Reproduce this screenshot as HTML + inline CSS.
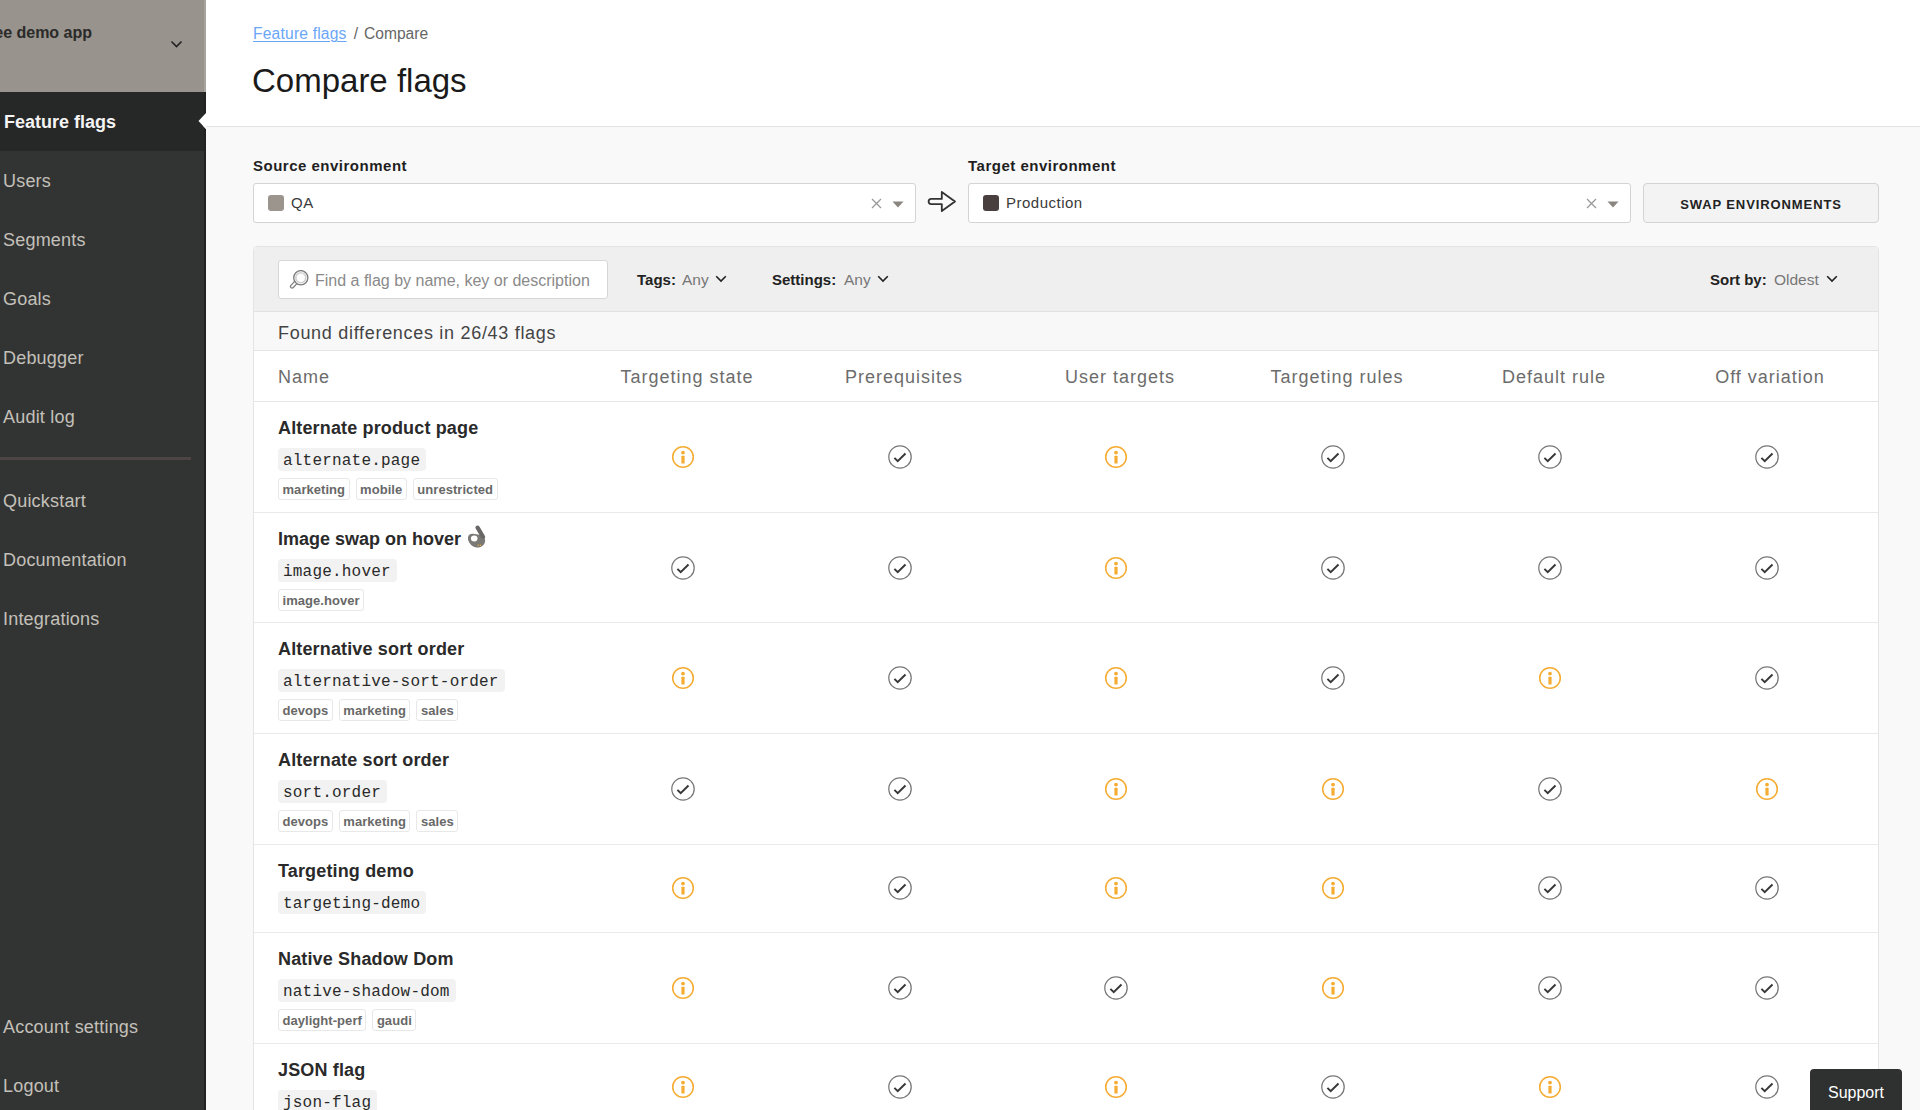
<!DOCTYPE html>
<html><head><meta charset="utf-8">
<style>
*{box-sizing:border-box;margin:0;padding:0}
html,body{width:1920px;height:1110px;overflow:hidden}
body{font-family:"Liberation Sans",sans-serif;background:#f9f9f9;position:relative;color:#222}
.abs{position:absolute}
#sb{position:absolute;left:0;top:0;width:206px;height:1110px;background:#323433}
#sb .proj{position:absolute;left:0;top:0;width:204px;height:92px;background:#98938c}
#sb .edge{position:absolute;left:204px;top:0;width:2px;height:1110px;background:#222}
#sb .edge2{position:absolute;left:204px;top:0;width:2px;height:92px;background:#a7a39d}
#sb .projname{position:absolute;left:-12px;top:24px;font-size:16px;font-weight:700;color:#2a2a2a;white-space:nowrap}
#sb .active{position:absolute;left:0;top:92px;width:204px;height:59px;background:#262727}
#sb .nav{position:absolute;left:3px;font-size:18px;letter-spacing:0.2px;color:#c4c0ba;white-space:nowrap;line-height:20px}
#sb .nav.on{left:4px;color:#f4f4f4;font-weight:700;letter-spacing:0}
#sb .div{position:absolute;left:0;top:457px;width:191px;height:3px;background:#4b4545}
#hdr{position:absolute;left:206px;top:0;width:1714px;height:127px;background:#fff;border-bottom:1px solid #e3e3e3}
.crumb{position:absolute;left:253px;top:25px;font-size:15.6px;white-space:nowrap;line-height:18px}
.crumb a{letter-spacing:0.2px;color:#6aa6f8;text-decoration:underline;text-decoration-thickness:1px;text-underline-offset:2px}
.crumb span{color:#666}
.title{position:absolute;left:252px;top:63px;font-size:33px;color:#1a1a1a;white-space:nowrap;line-height:36px}
.lbl{position:absolute;top:157px;font-size:15px;font-weight:700;color:#1f1f1f;white-space:nowrap;line-height:18px;letter-spacing:0.5px}
.sel{position:absolute;top:183px;height:40px;background:#fff;border:1px solid #d4d4d4;border-radius:3px}
.sw{position:absolute;top:11px;width:16px;height:16px;border-radius:3px}
.seltxt{position:absolute;top:10px;font-size:15px;letter-spacing:0.5px;color:#3a3a3a;line-height:18px;white-space:nowrap}
.btn{position:absolute;left:1643px;top:183px;width:236px;height:40px;background:#f3f3f3;border:1px solid #d3d3d3;border-radius:4px;font-size:13px;font-weight:700;letter-spacing:0.9px;color:#222;text-align:center;line-height:39px;padding-top:1px}
#tbl{position:absolute;left:253px;top:246px;width:1626px;height:900px;background:#fff;border:1px solid #e4e4e4;border-radius:4px 4px 0 0}
.fbar{position:absolute;left:0;top:0;width:1624px;height:65px;background:#efefef;border-bottom:1px solid #e2e2e2;border-radius:3px 3px 0 0}
.search{position:absolute;left:24px;top:13px;width:330px;height:39px;background:#fff;border:1px solid #d6d6d6;border-radius:3px}
.ph{position:absolute;left:36px;top:10px;font-size:16px;color:#8a8a8a;white-space:nowrap;line-height:20px}
.flt{position:absolute;top:23px;font-size:15px;white-space:nowrap;line-height:20px;color:#222}
.flt b{font-weight:700}
.flt.v{color:#777;font-size:15.5px}
.found{position:absolute;left:0;top:65px;width:1624px;height:39px;background:#f8f8f8;border-bottom:1px solid #e4e4e4}
.found div{position:absolute;left:24px;top:11px;font-size:18px;color:#444;letter-spacing:0.7px;white-space:nowrap;line-height:20px}
.th{position:absolute;left:0;top:104px;width:1624px;height:51px;border-bottom:1px solid #e6e6e6}
.th div{position:absolute;top:16px;font-size:18px;color:#6c6c6c;letter-spacing:1px;white-space:nowrap;line-height:20px;text-align:center;width:216px}
.row{position:absolute;left:0;width:1624px;border-bottom:1px solid #e9e9e9}
.nm{position:absolute;left:24px;top:15px;font-size:18px;font-weight:700;color:#2a2a2a;letter-spacing:0.15px;white-space:nowrap;line-height:22px}
.key{position:absolute;left:24px;top:46px;height:23px;background:#f2f2f2;border-radius:4px;padding:2px 6px 0 5px;letter-spacing:0.2px;font-family:"Liberation Mono",monospace;font-size:16px;color:#2a2a2a;line-height:23px;white-space:nowrap}
.tags{position:absolute;left:24px;top:76px;white-space:nowrap;font-size:0}
.tag{display:inline-block;height:22px;border:1px solid #e8e8e8;border-radius:3px;padding:0 3.5px;margin-right:6px;font-size:13px;font-weight:700;letter-spacing:0.05px;line-height:21px;color:#686868;background:#fff}
.ic{position:absolute;width:26px;height:26px}
.support{position:absolute;left:1810px;top:1069px;width:92px;height:45px;background:#2f3131;border-radius:4px 4px 0 0;color:#fff;font-size:16px;line-height:48px;text-align:center}
</style></head><body>
<div id="sb">
  <div class="proj"></div>
  <div class="edge"></div>
  <div class="edge2"></div>
  <div class="projname">ree demo app</div>
  <svg class="abs" style="left:170px;top:40px" width="13" height="9" viewBox="0 0 13 9"><path d="M1.5 1.5 L6.5 6.5 L11.5 1.5" fill="none" stroke="#222" stroke-width="1.6"/></svg>
  <div class="active"></div>
  <svg class="abs" style="left:198px;top:113px" width="8" height="16" viewBox="0 0 8 16"><path d="M8 0 L0.5 8 L8 16 Z" fill="#fff"/><path d="M8 13 L5.2 13 L8 16 Z" fill="#f9f9f9"/></svg>
  <div class="nav on" style="top:112px">Feature flags</div>
  <div class="nav" style="top:171px">Users</div>
  <div class="nav" style="top:230px">Segments</div>
  <div class="nav" style="top:289px">Goals</div>
  <div class="nav" style="top:348px">Debugger</div>
  <div class="nav" style="top:407px">Audit log</div>
  <div class="div"></div>
  <div class="nav" style="top:491px">Quickstart</div>
  <div class="nav" style="top:550px">Documentation</div>
  <div class="nav" style="top:609px">Integrations</div>
  <div class="nav" style="top:1017px">Account settings</div>
  <div class="nav" style="top:1076px">Logout</div>
</div>
<div id="hdr"></div>
<div class="crumb"><a>Feature flags</a><span style="margin:0 6px 0 7px">/</span><span>Compare</span></div>
<div class="title">Compare flags</div>

<div class="lbl" style="left:253px">Source environment</div>
<div class="sel" style="left:253px;width:663px">
  <div class="sw" style="left:14px;background:#9b958e"></div>
  <div class="seltxt" style="left:37px">QA</div>
  <svg class="abs" style="left:617px;top:14px" width="11" height="11" viewBox="0 0 11 11"><path d="M1 1 L10 10 M10 1 L1 10" stroke="#999" stroke-width="1.3"/></svg>
  <svg class="abs" style="left:638px;top:17px" width="12" height="7" viewBox="0 0 12 7"><path d="M0.5 0.5 L11.5 0.5 L6 6.5 Z" fill="#8a857e"/></svg>
</div>
<svg class="abs" style="left:926px;top:189px" width="32" height="25" viewBox="0 0 32 25"><path d="M5.2 9.9 L15.8 9.9 L15.8 2.9 L29 12.5 L15.8 22.1 L15.8 15.1 L5.2 15.1 A2.6 2.6 0 0 1 5.2 9.9 Z" fill="none" stroke="#333" stroke-width="1.8" stroke-linejoin="round"/></svg>
<div class="lbl" style="left:968px">Target environment</div>
<div class="sel" style="left:968px;width:663px">
  <div class="sw" style="left:14px;background:#4a3f3f"></div>
  <div class="seltxt" style="left:37px">Production</div>
  <svg class="abs" style="left:617px;top:14px" width="11" height="11" viewBox="0 0 11 11"><path d="M1 1 L10 10 M10 1 L1 10" stroke="#999" stroke-width="1.3"/></svg>
  <svg class="abs" style="left:638px;top:17px" width="12" height="7" viewBox="0 0 12 7"><path d="M0.5 0.5 L11.5 0.5 L6 6.5 Z" fill="#8a857e"/></svg>
</div>
<div class="btn">SWAP ENVIRONMENTS</div>

<div id="tbl">
  <div class="fbar">
    <div class="search">
      <svg class="abs" style="left:10px;top:9px" width="22" height="22" viewBox="0 0 22 22"><path d="M6.3 13 L3.1 16.4" stroke="#7c7c7c" stroke-width="4.4" stroke-linecap="round"/><path d="M6.3 13 L3.1 16.4" stroke="#fff" stroke-width="2" stroke-linecap="round"/><circle cx="11.8" cy="7.7" r="7.1" fill="#fff" stroke="#7c7c7c" stroke-width="1.3"/><circle cx="11.8" cy="7.7" r="5" fill="none" stroke="#d0d0d0" stroke-width="1.6"/></svg>
      <div class="ph">Find a flag by name, key or description</div>
    </div>
    <div class="flt" style="left:383px"><b>Tags:</b></div><div class="flt v" style="left:428px">Any</div>
    <svg class="abs" style="left:461px;top:28px" width="12" height="8" viewBox="0 0 12 8"><path d="M1.2 1.2 L6 6 L10.8 1.2" fill="none" stroke="#222" stroke-width="1.6"/></svg>
    <div class="flt" style="left:518px"><b>Settings:</b></div><div class="flt v" style="left:590px">Any</div>
    <svg class="abs" style="left:623px;top:28px" width="12" height="8" viewBox="0 0 12 8"><path d="M1.2 1.2 L6 6 L10.8 1.2" fill="none" stroke="#222" stroke-width="1.6"/></svg>
    <div class="flt" style="left:1456px"><b>Sort by:</b></div><div class="flt v" style="left:1520px">Oldest</div>
    <svg class="abs" style="left:1572px;top:28px" width="12" height="8" viewBox="0 0 12 8"><path d="M1.2 1.2 L6 6 L10.8 1.2" fill="none" stroke="#222" stroke-width="1.6"/></svg>
  </div>
  <div class="found"><div>Found differences in 26/43 flags</div></div>
  <div class="th">
    <div style="left:24px;text-align:left">Name</div>
    <div style="left:325px">Targeting state</div>
    <div style="left:542px">Prerequisites</div>
    <div style="left:758px">User targets</div>
    <div style="left:975px">Targeting rules</div>
    <div style="left:1192px">Default rule</div>
    <div style="left:1408px">Off variation</div>
  </div>
  <!--ROWS-->
<div class="row" style="top:155px;height:111px"><div class="nm">Alternate product page</div><div class="key">alternate.page</div><div class="tags"><span class="tag">marketing</span><span class="tag">mobile</span><span class="tag">unrestricted</span></div><svg class="ic" style="left:416px;top:42px" width="26" height="26" viewBox="0 0 26 26"><circle cx="13" cy="13" r="10.3" fill="none" stroke="#f5ac33" stroke-width="1.55"/><circle cx="13" cy="8.6" r="1.9" fill="#f5ac33"/><rect x="11.4" y="11.7" width="3.2" height="7.8" rx="0.6" fill="#f5ac33"/></svg><svg class="ic" style="left:633px;top:42px" width="26" height="26" viewBox="0 0 26 26"><circle cx="13" cy="13" r="11.2" fill="none" stroke="#777" stroke-width="1.25"/><path d="M7.4 13.9 L10.7 17.1 L18.5 9.5" fill="none" stroke="#383838" stroke-width="2"/></svg><svg class="ic" style="left:849px;top:42px" width="26" height="26" viewBox="0 0 26 26"><circle cx="13" cy="13" r="10.3" fill="none" stroke="#f5ac33" stroke-width="1.55"/><circle cx="13" cy="8.6" r="1.9" fill="#f5ac33"/><rect x="11.4" y="11.7" width="3.2" height="7.8" rx="0.6" fill="#f5ac33"/></svg><svg class="ic" style="left:1066px;top:42px" width="26" height="26" viewBox="0 0 26 26"><circle cx="13" cy="13" r="11.2" fill="none" stroke="#777" stroke-width="1.25"/><path d="M7.4 13.9 L10.7 17.1 L18.5 9.5" fill="none" stroke="#383838" stroke-width="2"/></svg><svg class="ic" style="left:1283px;top:42px" width="26" height="26" viewBox="0 0 26 26"><circle cx="13" cy="13" r="11.2" fill="none" stroke="#777" stroke-width="1.25"/><path d="M7.4 13.9 L10.7 17.1 L18.5 9.5" fill="none" stroke="#383838" stroke-width="2"/></svg><svg class="ic" style="left:1500px;top:42px" width="26" height="26" viewBox="0 0 26 26"><circle cx="13" cy="13" r="11.2" fill="none" stroke="#777" stroke-width="1.25"/><path d="M7.4 13.9 L10.7 17.1 L18.5 9.5" fill="none" stroke="#383838" stroke-width="2"/></svg></div>
<div class="row" style="top:266px;height:110px"><div class="nm" style="letter-spacing:0">Image swap on hover</div><svg class="abs" style="left:212px;top:12px" width="22" height="24" viewBox="0 0 22 24"><path d="M2 12.5 Q2.5 8.5 7 8.8 L13.5 9.8 Q19 11.5 19.2 15.5 Q18.8 21.2 13 22.4 Q6.5 23 3.2 17.5 Q1.6 14.8 2 12.5 Z" fill="#7b7976"/><path d="M11.6 2.6 L17 11.8" stroke="#6a6866" stroke-width="4.2" stroke-linecap="round"/><ellipse cx="8.2" cy="13.4" rx="3.3" ry="3" fill="#fff"/><circle cx="12.3" cy="20.3" r="0.7" fill="#f0b030"/><circle cx="14.4" cy="20.3" r="0.7" fill="#f0b030"/></svg><div class="key">image.hover</div><div class="tags"><span class="tag">image.hover</span></div><svg class="ic" style="left:416px;top:42px" width="26" height="26" viewBox="0 0 26 26"><circle cx="13" cy="13" r="11.2" fill="none" stroke="#777" stroke-width="1.25"/><path d="M7.4 13.9 L10.7 17.1 L18.5 9.5" fill="none" stroke="#383838" stroke-width="2"/></svg><svg class="ic" style="left:633px;top:42px" width="26" height="26" viewBox="0 0 26 26"><circle cx="13" cy="13" r="11.2" fill="none" stroke="#777" stroke-width="1.25"/><path d="M7.4 13.9 L10.7 17.1 L18.5 9.5" fill="none" stroke="#383838" stroke-width="2"/></svg><svg class="ic" style="left:849px;top:42px" width="26" height="26" viewBox="0 0 26 26"><circle cx="13" cy="13" r="10.3" fill="none" stroke="#f5ac33" stroke-width="1.55"/><circle cx="13" cy="8.6" r="1.9" fill="#f5ac33"/><rect x="11.4" y="11.7" width="3.2" height="7.8" rx="0.6" fill="#f5ac33"/></svg><svg class="ic" style="left:1066px;top:42px" width="26" height="26" viewBox="0 0 26 26"><circle cx="13" cy="13" r="11.2" fill="none" stroke="#777" stroke-width="1.25"/><path d="M7.4 13.9 L10.7 17.1 L18.5 9.5" fill="none" stroke="#383838" stroke-width="2"/></svg><svg class="ic" style="left:1283px;top:42px" width="26" height="26" viewBox="0 0 26 26"><circle cx="13" cy="13" r="11.2" fill="none" stroke="#777" stroke-width="1.25"/><path d="M7.4 13.9 L10.7 17.1 L18.5 9.5" fill="none" stroke="#383838" stroke-width="2"/></svg><svg class="ic" style="left:1500px;top:42px" width="26" height="26" viewBox="0 0 26 26"><circle cx="13" cy="13" r="11.2" fill="none" stroke="#777" stroke-width="1.25"/><path d="M7.4 13.9 L10.7 17.1 L18.5 9.5" fill="none" stroke="#383838" stroke-width="2"/></svg></div>
<div class="row" style="top:376px;height:111px"><div class="nm">Alternative sort order</div><div class="key">alternative-sort-order</div><div class="tags"><span class="tag">devops</span><span class="tag">marketing</span><span class="tag">sales</span></div><svg class="ic" style="left:416px;top:42px" width="26" height="26" viewBox="0 0 26 26"><circle cx="13" cy="13" r="10.3" fill="none" stroke="#f5ac33" stroke-width="1.55"/><circle cx="13" cy="8.6" r="1.9" fill="#f5ac33"/><rect x="11.4" y="11.7" width="3.2" height="7.8" rx="0.6" fill="#f5ac33"/></svg><svg class="ic" style="left:633px;top:42px" width="26" height="26" viewBox="0 0 26 26"><circle cx="13" cy="13" r="11.2" fill="none" stroke="#777" stroke-width="1.25"/><path d="M7.4 13.9 L10.7 17.1 L18.5 9.5" fill="none" stroke="#383838" stroke-width="2"/></svg><svg class="ic" style="left:849px;top:42px" width="26" height="26" viewBox="0 0 26 26"><circle cx="13" cy="13" r="10.3" fill="none" stroke="#f5ac33" stroke-width="1.55"/><circle cx="13" cy="8.6" r="1.9" fill="#f5ac33"/><rect x="11.4" y="11.7" width="3.2" height="7.8" rx="0.6" fill="#f5ac33"/></svg><svg class="ic" style="left:1066px;top:42px" width="26" height="26" viewBox="0 0 26 26"><circle cx="13" cy="13" r="11.2" fill="none" stroke="#777" stroke-width="1.25"/><path d="M7.4 13.9 L10.7 17.1 L18.5 9.5" fill="none" stroke="#383838" stroke-width="2"/></svg><svg class="ic" style="left:1283px;top:42px" width="26" height="26" viewBox="0 0 26 26"><circle cx="13" cy="13" r="10.3" fill="none" stroke="#f5ac33" stroke-width="1.55"/><circle cx="13" cy="8.6" r="1.9" fill="#f5ac33"/><rect x="11.4" y="11.7" width="3.2" height="7.8" rx="0.6" fill="#f5ac33"/></svg><svg class="ic" style="left:1500px;top:42px" width="26" height="26" viewBox="0 0 26 26"><circle cx="13" cy="13" r="11.2" fill="none" stroke="#777" stroke-width="1.25"/><path d="M7.4 13.9 L10.7 17.1 L18.5 9.5" fill="none" stroke="#383838" stroke-width="2"/></svg></div>
<div class="row" style="top:487px;height:111px"><div class="nm">Alternate sort order</div><div class="key">sort.order</div><div class="tags"><span class="tag">devops</span><span class="tag">marketing</span><span class="tag">sales</span></div><svg class="ic" style="left:416px;top:42px" width="26" height="26" viewBox="0 0 26 26"><circle cx="13" cy="13" r="11.2" fill="none" stroke="#777" stroke-width="1.25"/><path d="M7.4 13.9 L10.7 17.1 L18.5 9.5" fill="none" stroke="#383838" stroke-width="2"/></svg><svg class="ic" style="left:633px;top:42px" width="26" height="26" viewBox="0 0 26 26"><circle cx="13" cy="13" r="11.2" fill="none" stroke="#777" stroke-width="1.25"/><path d="M7.4 13.9 L10.7 17.1 L18.5 9.5" fill="none" stroke="#383838" stroke-width="2"/></svg><svg class="ic" style="left:849px;top:42px" width="26" height="26" viewBox="0 0 26 26"><circle cx="13" cy="13" r="10.3" fill="none" stroke="#f5ac33" stroke-width="1.55"/><circle cx="13" cy="8.6" r="1.9" fill="#f5ac33"/><rect x="11.4" y="11.7" width="3.2" height="7.8" rx="0.6" fill="#f5ac33"/></svg><svg class="ic" style="left:1066px;top:42px" width="26" height="26" viewBox="0 0 26 26"><circle cx="13" cy="13" r="10.3" fill="none" stroke="#f5ac33" stroke-width="1.55"/><circle cx="13" cy="8.6" r="1.9" fill="#f5ac33"/><rect x="11.4" y="11.7" width="3.2" height="7.8" rx="0.6" fill="#f5ac33"/></svg><svg class="ic" style="left:1283px;top:42px" width="26" height="26" viewBox="0 0 26 26"><circle cx="13" cy="13" r="11.2" fill="none" stroke="#777" stroke-width="1.25"/><path d="M7.4 13.9 L10.7 17.1 L18.5 9.5" fill="none" stroke="#383838" stroke-width="2"/></svg><svg class="ic" style="left:1500px;top:42px" width="26" height="26" viewBox="0 0 26 26"><circle cx="13" cy="13" r="10.3" fill="none" stroke="#f5ac33" stroke-width="1.55"/><circle cx="13" cy="8.6" r="1.9" fill="#f5ac33"/><rect x="11.4" y="11.7" width="3.2" height="7.8" rx="0.6" fill="#f5ac33"/></svg></div>
<div class="row" style="top:598px;height:88px"><div class="nm">Targeting demo</div><div class="key">targeting-demo</div><svg class="ic" style="left:416px;top:30px" width="26" height="26" viewBox="0 0 26 26"><circle cx="13" cy="13" r="10.3" fill="none" stroke="#f5ac33" stroke-width="1.55"/><circle cx="13" cy="8.6" r="1.9" fill="#f5ac33"/><rect x="11.4" y="11.7" width="3.2" height="7.8" rx="0.6" fill="#f5ac33"/></svg><svg class="ic" style="left:633px;top:30px" width="26" height="26" viewBox="0 0 26 26"><circle cx="13" cy="13" r="11.2" fill="none" stroke="#777" stroke-width="1.25"/><path d="M7.4 13.9 L10.7 17.1 L18.5 9.5" fill="none" stroke="#383838" stroke-width="2"/></svg><svg class="ic" style="left:849px;top:30px" width="26" height="26" viewBox="0 0 26 26"><circle cx="13" cy="13" r="10.3" fill="none" stroke="#f5ac33" stroke-width="1.55"/><circle cx="13" cy="8.6" r="1.9" fill="#f5ac33"/><rect x="11.4" y="11.7" width="3.2" height="7.8" rx="0.6" fill="#f5ac33"/></svg><svg class="ic" style="left:1066px;top:30px" width="26" height="26" viewBox="0 0 26 26"><circle cx="13" cy="13" r="10.3" fill="none" stroke="#f5ac33" stroke-width="1.55"/><circle cx="13" cy="8.6" r="1.9" fill="#f5ac33"/><rect x="11.4" y="11.7" width="3.2" height="7.8" rx="0.6" fill="#f5ac33"/></svg><svg class="ic" style="left:1283px;top:30px" width="26" height="26" viewBox="0 0 26 26"><circle cx="13" cy="13" r="11.2" fill="none" stroke="#777" stroke-width="1.25"/><path d="M7.4 13.9 L10.7 17.1 L18.5 9.5" fill="none" stroke="#383838" stroke-width="2"/></svg><svg class="ic" style="left:1500px;top:30px" width="26" height="26" viewBox="0 0 26 26"><circle cx="13" cy="13" r="11.2" fill="none" stroke="#777" stroke-width="1.25"/><path d="M7.4 13.9 L10.7 17.1 L18.5 9.5" fill="none" stroke="#383838" stroke-width="2"/></svg></div>
<div class="row" style="top:686px;height:111px"><div class="nm">Native Shadow Dom</div><div class="key">native-shadow-dom</div><div class="tags"><span class="tag">daylight-perf</span><span class="tag">gaudi</span></div><svg class="ic" style="left:416px;top:42px" width="26" height="26" viewBox="0 0 26 26"><circle cx="13" cy="13" r="10.3" fill="none" stroke="#f5ac33" stroke-width="1.55"/><circle cx="13" cy="8.6" r="1.9" fill="#f5ac33"/><rect x="11.4" y="11.7" width="3.2" height="7.8" rx="0.6" fill="#f5ac33"/></svg><svg class="ic" style="left:633px;top:42px" width="26" height="26" viewBox="0 0 26 26"><circle cx="13" cy="13" r="11.2" fill="none" stroke="#777" stroke-width="1.25"/><path d="M7.4 13.9 L10.7 17.1 L18.5 9.5" fill="none" stroke="#383838" stroke-width="2"/></svg><svg class="ic" style="left:849px;top:42px" width="26" height="26" viewBox="0 0 26 26"><circle cx="13" cy="13" r="11.2" fill="none" stroke="#777" stroke-width="1.25"/><path d="M7.4 13.9 L10.7 17.1 L18.5 9.5" fill="none" stroke="#383838" stroke-width="2"/></svg><svg class="ic" style="left:1066px;top:42px" width="26" height="26" viewBox="0 0 26 26"><circle cx="13" cy="13" r="10.3" fill="none" stroke="#f5ac33" stroke-width="1.55"/><circle cx="13" cy="8.6" r="1.9" fill="#f5ac33"/><rect x="11.4" y="11.7" width="3.2" height="7.8" rx="0.6" fill="#f5ac33"/></svg><svg class="ic" style="left:1283px;top:42px" width="26" height="26" viewBox="0 0 26 26"><circle cx="13" cy="13" r="11.2" fill="none" stroke="#777" stroke-width="1.25"/><path d="M7.4 13.9 L10.7 17.1 L18.5 9.5" fill="none" stroke="#383838" stroke-width="2"/></svg><svg class="ic" style="left:1500px;top:42px" width="26" height="26" viewBox="0 0 26 26"><circle cx="13" cy="13" r="11.2" fill="none" stroke="#777" stroke-width="1.25"/><path d="M7.4 13.9 L10.7 17.1 L18.5 9.5" fill="none" stroke="#383838" stroke-width="2"/></svg></div>
<div class="row" style="top:797px;height:88px"><div class="nm">JSON flag</div><div class="key">json-flag</div><svg class="ic" style="left:416px;top:30px" width="26" height="26" viewBox="0 0 26 26"><circle cx="13" cy="13" r="10.3" fill="none" stroke="#f5ac33" stroke-width="1.55"/><circle cx="13" cy="8.6" r="1.9" fill="#f5ac33"/><rect x="11.4" y="11.7" width="3.2" height="7.8" rx="0.6" fill="#f5ac33"/></svg><svg class="ic" style="left:633px;top:30px" width="26" height="26" viewBox="0 0 26 26"><circle cx="13" cy="13" r="11.2" fill="none" stroke="#777" stroke-width="1.25"/><path d="M7.4 13.9 L10.7 17.1 L18.5 9.5" fill="none" stroke="#383838" stroke-width="2"/></svg><svg class="ic" style="left:849px;top:30px" width="26" height="26" viewBox="0 0 26 26"><circle cx="13" cy="13" r="10.3" fill="none" stroke="#f5ac33" stroke-width="1.55"/><circle cx="13" cy="8.6" r="1.9" fill="#f5ac33"/><rect x="11.4" y="11.7" width="3.2" height="7.8" rx="0.6" fill="#f5ac33"/></svg><svg class="ic" style="left:1066px;top:30px" width="26" height="26" viewBox="0 0 26 26"><circle cx="13" cy="13" r="11.2" fill="none" stroke="#777" stroke-width="1.25"/><path d="M7.4 13.9 L10.7 17.1 L18.5 9.5" fill="none" stroke="#383838" stroke-width="2"/></svg><svg class="ic" style="left:1283px;top:30px" width="26" height="26" viewBox="0 0 26 26"><circle cx="13" cy="13" r="10.3" fill="none" stroke="#f5ac33" stroke-width="1.55"/><circle cx="13" cy="8.6" r="1.9" fill="#f5ac33"/><rect x="11.4" y="11.7" width="3.2" height="7.8" rx="0.6" fill="#f5ac33"/></svg><svg class="ic" style="left:1500px;top:30px" width="26" height="26" viewBox="0 0 26 26"><circle cx="13" cy="13" r="11.2" fill="none" stroke="#777" stroke-width="1.25"/><path d="M7.4 13.9 L10.7 17.1 L18.5 9.5" fill="none" stroke="#383838" stroke-width="2"/></svg></div>
<!--/ROWS-->
</div>
<div class="support">Support</div>
</body></html>
